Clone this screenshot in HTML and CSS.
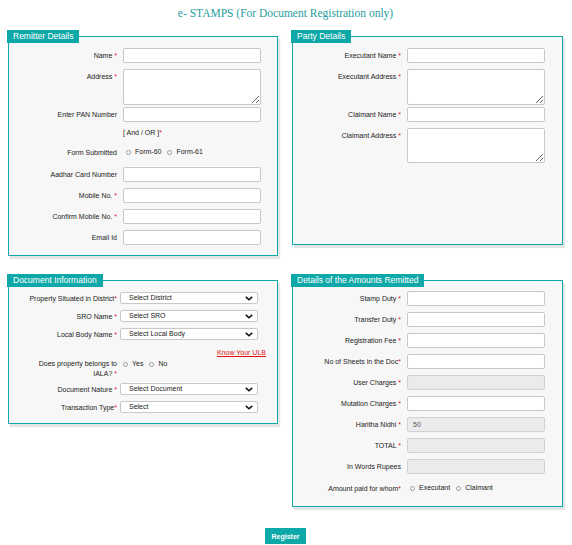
FILE: index.html
```html
<!DOCTYPE html>
<html lang="en">
<head>
<meta charset="utf-8">
<title>e- STAMPS</title>
<link rel="stylesheet" href="styles.css">
</head>
<body>
<div class="page">
  <h1 class="title">e- STAMPS (For Document Registration only)</h1>

  <div class="grid">
    <fieldset class="panel">
      <legend>Remitter Details</legend>
      <div class="panel-body">
        <div class="row"><label class="lbl">Name <span class="req">*</span></label><input class="field" type="text"></div>
        <div class="row row-tall"><label class="lbl">Address <span class="req">*</span></label><textarea class="area"></textarea></div>
        <div class="row"><label class="lbl">Enter PAN Number</label><input class="field" type="text"></div>
        <div class="row row-note"><span></span><span class="note">[ And / OR ]<span class="req">*</span></span></div>
        <div class="row row-radio"><label class="lbl">Form Submitted</label>
          <div class="radios">
            <label class="opt"><input type="radio" name="form">Form-60</label>
            <label class="opt"><input type="radio" name="form">Form-61</label>
          </div>
        </div>
        <div class="row"><label class="lbl">Aadhar Card Number</label><input class="field" type="text"></div>
        <div class="row"><label class="lbl">Mobile No. <span class="req">*</span></label><input class="field" type="text"></div>
        <div class="row"><label class="lbl">Confirm Mobile No. <span class="req">*</span></label><input class="field" type="text"></div>
        <div class="row"><label class="lbl">Email Id</label><input class="field" type="text"></div>
      </div>
    </fieldset>

    <fieldset class="panel">
      <legend>Party Details</legend>
      <div class="panel-body party-body">
        <div class="row"><label class="lbl">Executant Name <span class="req">*</span></label><input class="field" type="text"></div>
        <div class="row row-tall"><label class="lbl">Executant Address <span class="req">*</span></label><textarea class="area"></textarea></div>
        <div class="row"><label class="lbl">Claimant Name <span class="req">*</span></label><input class="field" type="text"></div>
        <div class="row row-tall"><label class="lbl">Claimant Address <span class="req">*</span></label><textarea class="area area-short"></textarea></div>
      </div>
    </fieldset>

    <fieldset class="panel">
      <legend>Document Information</legend>
      <div class="panel-body doc-body">
        <div class="row row-sel"><label class="lbl">Property Situated in District<span class="req">*</span></label>
          <div class="select-wrap"><select class="sel"><option>Select District</option></select><svg class="chev" viewBox="0 0 10 6" aria-hidden="true"><path d="M1 1 L5 4.6 L9 1"/></svg></div>
        </div>
        <div class="row row-sel"><label class="lbl">SRO Name <span class="req">*</span></label>
          <div class="select-wrap"><select class="sel"><option>Select SRO</option></select><svg class="chev" viewBox="0 0 10 6" aria-hidden="true"><path d="M1 1 L5 4.6 L9 1"/></svg></div>
        </div>
        <div class="row row-sel"><label class="lbl">Local Body Name <span class="req">*</span></label>
          <div class="select-wrap"><select class="sel"><option>Select Local Body</option></select><svg class="chev" viewBox="0 0 10 6" aria-hidden="true"><path d="M1 1 L5 4.6 L9 1"/></svg></div>
        </div>
        <div class="ulb-row"><a class="ulb" href="#">Know Your ULB</a></div>
        <div class="row row-iala"><label class="lbl lbl-wrap">Does property belongs to<br>IALA? <span class="req">*</span></label>
          <div class="radios">
            <label class="opt"><input type="radio" name="iala">Yes</label>
            <label class="opt"><input type="radio" name="iala">No</label>
          </div>
        </div>
        <div class="row row-sel"><label class="lbl">Document Nature <span class="req">*</span></label>
          <div class="select-wrap"><select class="sel"><option>Select Document</option></select><svg class="chev" viewBox="0 0 10 6" aria-hidden="true"><path d="M1 1 L5 4.6 L9 1"/></svg></div>
        </div>
        <div class="row row-sel"><label class="lbl">Transaction Type<span class="req">*</span></label>
          <div class="select-wrap"><select class="sel"><option>Select</option></select><svg class="chev" viewBox="0 0 10 6" aria-hidden="true"><path d="M1 1 L5 4.6 L9 1"/></svg></div>
        </div>
      </div>
    </fieldset>

    <fieldset class="panel">
      <legend>Details of the Amounts Remitted</legend>
      <div class="panel-body amount-body">
        <div class="row"><label class="lbl">Stamp Duty <span class="req">*</span></label><input class="field" type="text"></div>
        <div class="row"><label class="lbl">Transfer Duty <span class="req">*</span></label><input class="field" type="text"></div>
        <div class="row"><label class="lbl">Registration Fee <span class="req">*</span></label><input class="field" type="text"></div>
        <div class="row"><label class="lbl">No of Sheets in the Doc<span class="req">*</span></label><input class="field" type="text"></div>
        <div class="row"><label class="lbl">User Charges <span class="req">*</span></label><input class="field" type="text" disabled></div>
        <div class="row"><label class="lbl">Mutation Charges <span class="req">*</span></label><input class="field" type="text"></div>
        <div class="row"><label class="lbl">Haritha Nidhi <span class="req">*</span></label><input class="field" type="text" value="50" disabled></div>
        <div class="row"><label class="lbl">TOTAL <span class="req">*</span></label><input class="field" type="text" disabled></div>
        <div class="row"><label class="lbl">In Words Rupees</label><input class="field" type="text" disabled></div>
        <div class="row row-paid"><label class="lbl">Amount paid for whom<span class="req">*</span></label>
          <div class="radios">
            <label class="opt"><input type="radio" name="paid">Executant</label>
            <label class="opt"><input type="radio" name="paid">Claimant</label>
          </div>
        </div>
      </div>
    </fieldset>
  </div>

  <div class="actions"><button class="btn" type="button">Register</button></div>
</div>
</body>
</html>
```

FILE: styles.css
```css
* { box-sizing: border-box; }

body {
  margin: 0;
  background: #fff;
  font-family: "Liberation Sans", Arial, sans-serif;
  color: #222;
}

.page {
  width: 555px;
  margin: 0 8px;
  padding-top: 6px;
}

.title {
  margin: 0;
  font: normal 11.5px/14px "Liberation Serif", "Times New Roman", serif;
  color: #1f9e9e;
  text-align: center;
}

.grid {
  display: grid;
  grid-template-columns: 270px 271px;
  column-gap: 14px;
  row-gap: 18px;
  margin-top: 10px;
  align-items: start;
}

.panel {
  margin: 0;
  padding: 0;
  min-width: 0;
  border: 1px solid #0fa8a8;
  background: #f7f7f7;
  box-shadow: 2px 3px 1px rgba(0, 0, 0, 0.1);
}

.panel legend {
  margin-left: -2px;
  padding: 0 6px;
  background: #0fa8a8;
  color: #fff;
  font-size: 8.5px;
  line-height: 13px;
}

.panel-body {
  padding: 5px 0 10px;
}

.party-body { min-height: 201px; }
.amount-body { padding-top: 4px; }

.row {
  display: grid;
  grid-template-columns: 108px 138px;
  column-gap: 6px;
  align-items: center;
  margin-bottom: 6px;
}

.row:last-child { margin-bottom: 0; }

.row-tall {
  align-items: start;
  margin-bottom: 2px;
}

.row-tall .lbl { padding-top: 3px; }

.lbl {
  text-align: right;
  font-size: 7px;
  line-height: 9px;
  color: #222;
  white-space: nowrap;
}

.req { color: #e0102a; }

.field {
  display: block;
  width: 138px;
  height: 15px;
  margin: 0;
  padding: 0 5px;
  border: 1px solid #c8c8c8;
  border-radius: 2px;
  background: #fff;
  font: 7px "Liberation Sans", Arial, sans-serif;
  color: #555;
}

.field:disabled {
  background: #ebebeb;
  border-color: #d2d2d2;
  color: #555;
}

.area {
  display: block;
  width: 138px;
  height: 36px;
  margin: 0;
  padding: 2px 5px;
  border: 1px solid #c8c8c8;
  border-radius: 2px;
  background: #fff;
  font: 7px "Liberation Sans", Arial, sans-serif;
}

.area-short { height: 35px; }

.row-note {
  height: 12px;
  margin-top: -1px;
  margin-bottom: 7px;
}

.note {
  font-size: 7px;
  line-height: 12px;
  color: #222;
}

.row-radio {
  height: 12px;
  margin-bottom: 9px;
}

.radios {
  display: flex;
  align-items: center;
  padding-left: 3px;
  font-size: 7px;
  line-height: 10px;
}

.opt {
  display: flex;
  align-items: center;
  gap: 4px;
  margin-right: 6px;
  color: #222;
}

.opt input {
  appearance: none;
  -webkit-appearance: none;
  width: 5px;
  height: 5px;
  margin: 0;
  border: 1px solid #9a9a9a;
  border-radius: 50%;
  background: #fff;
}

/* Document information */
.doc-body .row { column-gap: 3px; }

.row-sel { margin-bottom: 6px; }

.select-wrap {
  position: relative;
  width: 138px;
  height: 12px;
}

.sel {
  appearance: none;
  -webkit-appearance: none;
  display: block;
  width: 138px;
  height: 12px;
  margin: 0;
  padding: 0 8px;
  border: 1px solid #c8c8c8;
  border-radius: 2px;
  background: #fff;
  font: 7px "Liberation Sans", Arial, sans-serif;
  line-height: 10px;
  color: #222;
}

.chev {
  position: absolute;
  right: 5px;
  top: 3.5px;
  width: 8px;
  height: 5px;
  fill: none;
  stroke: #111;
  stroke-width: 2;
  pointer-events: none;
}

.ulb-row {
  width: 257px;
  height: 8px;
  line-height: 8px;
  margin-bottom: 5px;
  text-align: right;
}

.ulb {
  font-size: 7px;
  color: #e01010;
  text-decoration: underline;
}

.row-iala {
  align-items: start;
  margin-bottom: 4px;
}

.lbl-wrap { line-height: 10px; }

/* Amounts */
.row-paid {
  height: 16px;
}

.actions {
  display: flex;
  justify-content: center;
  margin-top: 21px;
}

.btn {
  height: 16px;
  padding: 0 6px;
  border: 0;
  border-radius: 0;
  background: #0fa8a8;
  color: #fff;
  font: bold 7px "Liberation Sans", Arial, sans-serif;
  cursor: pointer;
}
```
